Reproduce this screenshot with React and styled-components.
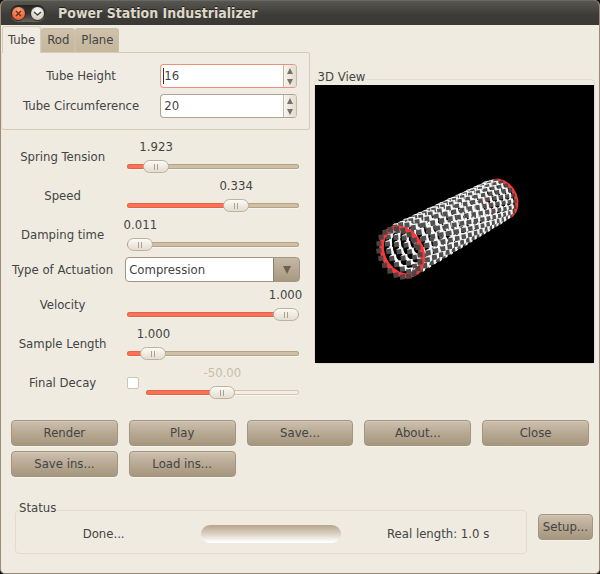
import React, { useState } from "react";
import styled, { createGlobalStyle } from "styled-components";

const GlobalStyle = createGlobalStyle`
  * {
    box-sizing: border-box;
  }

  body {
    margin: 0;
    background: #14110d;
    color: #444444;
    font: 13px/16px "DejaVu Sans Condensed", "DejaVu Sans", sans-serif;
  }

  button, input, select {
    margin: 0;
    font: inherit;
    color: inherit;
  }
`;

const Window = styled.main`
  display: flex;
  flex-direction: column;
  min-height: 100vh;
  border: 1px solid #9c8b76;
  border-top: 0;
  border-radius: 6px 6px 5px 5px;
  background: #efebe1;
  overflow: hidden;
`;

const TitleBar = styled.header`
  display: flex;
  align-items: center;
  gap: 12px;
  height: 25px;
  padding: 0 9px;
  border-top: 1px solid #6b6860;
  background: linear-gradient(#575650, #3c3b37 60%, #3a3935);
`;

const Title = styled.h1`
  margin: 0;
  font-size: 14px;
  line-height: 16px;
  color: #dfd8c8;
  text-shadow: 0 -1px #22211f;
`;

const WindowButtons = styled.div`
  display: flex;
  align-items: center;
  justify-content: space-between;
  width: 36px;
  height: 17px;
  padding: 0 1px;
  border-radius: 9px;
  background: linear-gradient(#252421, #35342f 50%, #67655d);
`;

const RoundButton = styled.button`
  display: grid;
  place-items: center;
  width: 15px;
  height: 15px;
  padding: 0;
  border: 1px solid #2c2a26;
  border-radius: 50%;
  background: ${(props) =>
    props.$close
      ? "radial-gradient(circle at 50% 25%, #f9a37c, #ea6237 75%)"
      : "radial-gradient(circle at 50% 30%, #ffffff, #cbc4b6 85%)"};
  color: ${(props) => (props.$close ? "#7b3018" : "#4a4843")};
`;

const Columns = styled.div`
  display: grid;
  grid-template-columns: 308fr 281fr;
  gap: 4px;
  align-items: start;
  padding-right: 4px;
`;

const TabList = styled.div`
  display: flex;
  align-items: flex-end;
  height: 27px;
  padding: 0 1px;
`;

const Tab = styled.button`
  height: ${(props) => (props.$active ? 27 : 24)}px;
  margin-bottom: ${(props) => (props.$active ? -1 : 0)}px;
  padding: 0 5px 1px;
  border: 1px solid ${(props) => (props.$active ? "#d8ccb8" : "#cdbfa8")};
  border-bottom: 0;
  border-radius: 3px 3px 0 0;
  background: ${(props) =>
    props.$active ? "#f0ece3" : "linear-gradient(#cfc2ab, #c5b69c)"};
`;

const TabPanel = styled.div`
  display: grid;
  grid-template-columns: 158fr 136fr;
  row-gap: 6px;
  align-items: center;
  padding: 11px 12px 11px 0;
  border: 1px solid #d6c9b5;
  border-left-color: #e6dccb;
  border-radius: 0 3px 3px 3px;
  background: #f0ece3;
`;

const Caption = styled.label`
  text-align: center;
  white-space: nowrap;
`;

const SpinBox = styled.div`
  display: flex;
  align-items: center;
  height: 24px;
  padding-left: 2px;
  border: 1px solid ${(props) => (props.$focused ? "#f0907c" : "#b0a28c")};
  border-right-color: #c5b9a5;
  border-radius: 4px;
  background: #fff;
  overflow: hidden;
`;

const SpinInput = styled.input`
  flex: 1;
  min-width: 0;
  height: 16px;
  padding: 0;
  border: 0;
  border-left: 1px solid ${(props) => (props.$focused ? "#333" : "transparent")};
  outline: 0;
  background: none;
`;

const SpinButtons = styled.div`
  display: grid;
  grid-template-rows: 1fr 1fr;
  width: 13px;
  height: 100%;
  border-left: 1px solid #c5b9a5;
  background: linear-gradient(90deg, #f7f4ee, #e3dccf);
`;

const SpinButton = styled.button`
  display: grid;
  place-items: center;
  padding: 0;
  border: 0;
  background: none;
  color: #77716a;
`;

const Settings = styled.div`
  padding: 7px 10px 0 3px;
`;

const SettingRow = styled.div`
  display: grid;
  grid-template-columns: 117fr 174fr;
  column-gap: 4px;
  align-items: center;
  height: ${(props) => (props.$compact ? 31 : 39)}px;
`;

const Control = styled.div`
  display: flex;
  align-items: center;
  gap: 7px;
  padding: 0 1px 0 2px;
`;

const Slider = styled.div`
  flex: 1;
  min-width: 0;
`;

const SliderValue = styled.output`
  display: flex;
  justify-content: center;
  width: 26px;
  line-height: 20px;
  white-space: nowrap;
  color: ${(props) => (props.$disabled ? "#c9bda6" : "inherit")};
`;

const Range = styled.input`
  display: block;
  width: 100%;
  height: 19px;
  appearance: none;
  background: none;

  &::-webkit-slider-runnable-track {
    height: 5px;
    border-radius: 3px;
    background: linear-gradient(
      90deg,
      #ff7057 var(--fill),
      ${(props) => (props.disabled ? "#f3efe6" : "#cdc0a7")} var(--fill)
    );
    box-shadow: inset 0 0 0 1px rgba(120, 70, 20, 0.25), 0 1px #f8f6f0;
  }

  &::-webkit-slider-thumb {
    appearance: none;
    width: 26px;
    height: 13px;
    margin-top: -4px;
    border: 1px solid #bdb29f;
    border-radius: 7px;
    background:
      linear-gradient(#aaa192, #aaa192) 10px 3px / 1px 6px no-repeat,
      linear-gradient(#aaa192, #aaa192) 13px 3px / 1px 6px no-repeat,
      linear-gradient(#fcfaf6, #e4ddcf);
  }
`;

const CheckBox = styled.input`
  appearance: none;
  width: 12px;
  height: 12px;
  border: 1px solid #cfc4b2;
  border-radius: 2px;
  background: #fff;

  &:checked {
    background: #fb7058;
  }
`;

const Combo = styled.div`
  display: grid;
  grid-template-columns: 1fr 26px;
  align-items: center;
  justify-items: center;
`;

const Select = styled.select`
  grid-area: 1 / 1 / 2 / 3;
  width: 100%;
  height: 25px;
  padding: 0 30px 0 3px;
  appearance: none;
  border: 1px solid #a3957f;
  border-radius: 4px;
  background:
    linear-gradient(#8f816d, #8f816d) right 25px top / 1px 100% no-repeat,
    linear-gradient(#c5b8a5, #a79880) right / 25px 100% no-repeat,
    #fff;
`;

const ComboArrow = styled.svg`
  grid-area: 1 / 2;
  pointer-events: none;
`;

const Group = styled.fieldset`
  min-width: 0;
  margin: 0;
  padding: 0;
  border: 1px solid #e2dbcb;
  border-radius: 4px;
`;

const Legend = styled.legend`
  margin-left: 2px;
  padding: 0 1px 4px;
`;

const ViewGroup = styled(Group)`
  margin-top: 44px;
`;

const Viewport = styled.svg`
  display: block;
  width: 100%;
  margin-top: -4px;
  background: #000;
`;

const PushButton = styled.button`
  height: 26px;
  padding: 0 4px;
  border: 1px solid #a39681;
  border-radius: 4px;
  background: linear-gradient(#cdc0ae, #b9ab96 45%, #a6967d);
  box-shadow: inset 0 1px #d3c8b8, 0 1px #f6f3ec;
  white-space: nowrap;
`;

const Actions = styled.div`
  display: grid;
  grid-template-columns: repeat(5, 1fr);
  gap: 5px 11px;
  padding: 18px 10px 0;
`;

const Footer = styled.footer`
  display: flex;
  align-items: center;
  gap: 11px;
  padding: 23px 6px 19px 14px;
`;

const StatusGroup = styled(Group)`
  flex: 1;
`;

const StatusRow = styled.div`
  display: grid;
  grid-template-columns: repeat(3, 1fr);
  place-items: center;
  padding: 5px 4px 10px;
`;

const Progress = styled.progress`
  display: block;
  width: 140px;
  height: 18px;
  appearance: none;
  border-radius: 9px;
  overflow: hidden;

  &::-webkit-progress-bar {
    background: linear-gradient(#b8a68c, #d8cdbd 45%, #ffffff 95%);
  }

  &::-webkit-progress-value {
    background: #fb7058;
  }
`;

const RINGS = 16;
const MASSES = 20;

// one ring of masses, s runs from 0 (near end) to 1 (far end)
function ringPoints(s) {
  const scale = 1 / (1 + 0.29 * s);
  const f = (1 - scale) / (1 - 1 / 1.29);
  const cx = 84 + 99 * f;
  const cy = 168 - 53 * f;
  const points = [];
  for (let i = 0; i < MASSES; i++) {
    const a = (2 * Math.PI * (i + s * 5)) / MASSES;
    points.push([
      cx + scale * (20.5 * Math.cos(a) + 3 * Math.sin(a)),
      cy + scale * (24 * Math.sin(a) + 2 * Math.cos(a)),
    ]);
  }
  return { points, scale };
}

function TubeView() {
  const rings = [];
  for (let r = RINGS - 1; r >= 0; r--) {
    const { points, scale } = ringPoints(r / (RINGS - 1));
    const end = r === 0 || r === RINGS - 1;
    const size = 5 * scale;
    const light = end ? "#f43a3a" : "#f6f6f6";
    rings.push(
      <g key={r}>
        {!end &&
          points.map(([x, y], i) => (
            <path
              key={i}
              d={`M${x - size / 2} ${y - size / 2}l2 -1.500l${size} -.8l.6 ${size}l-2 1.500z`}
              fill={light}
            />
          ))}
        <polygon
          points={points.map(([x, y]) => `${x + 3 * scale},${y - 1.5 * scale}`).join(" ")}
          fill="none"
          stroke={light}
          strokeWidth={end ? 4.6 * scale : 3 * scale}
        />
        {points.map(([x, y], i) => (
          <path
            key={i}
            d={`M${x - size / 2} ${y - size / 2}l${size} -.8l.6 ${size}l-${size} .8z`}
            fill={end ? "#4f4343" : "#505050"}
          />
        ))}
      </g>
    );
  }
  return (
    <Viewport viewBox="0 0 279 278" role="img" aria-label="Tube model">
      {rings}
    </Viewport>
  );
}

function SpinField({ id, label, initial, focused }) {
  const [value, setValue] = useState(initial);

  return (
    <>
      <Caption htmlFor={id}>{label}</Caption>
      <SpinBox $focused={focused}>
        <SpinInput
          id={id}
          inputMode="numeric"
          value={value}
          $focused={focused}
          onChange={(e) => setValue(Number(e.target.value) || 0)}
        />
        <SpinButtons>
          <SpinButton aria-label={`Increase ${label}`} onClick={() => setValue(value + 1)}>
            <svg width="6" height="6" viewBox="0 0 6 6">
              <path d="M3 0L6 6H0z" fill="currentColor" />
            </svg>
          </SpinButton>
          <SpinButton aria-label={`Decrease ${label}`} onClick={() => setValue(value - 1)}>
            <svg width="6" height="6" viewBox="0 0 6 6">
              <path d="M0 0H6L3 6z" fill="currentColor" />
            </svg>
          </SpinButton>
        </SpinButtons>
      </SpinBox>
    </>
  );
}

function ValueSlider({ id, label, initial, min, max, digits = 3, disabled }) {
  const [value, setValue] = useState(initial);
  const ratio = (value - min) / (max - min);
  const offset = `calc((100% - 26px) * ${ratio})`;

  return (
    <Slider>
      <SliderValue htmlFor={id} $disabled={disabled} style={{ marginLeft: offset }}>
        {value.toFixed(digits)}
      </SliderValue>
      <Range
        id={id}
        type="range"
        aria-label={label}
        min={min}
        max={max}
        step="any"
        value={value}
        disabled={disabled}
        style={{ "--fill": `calc((100% - 26px) * ${ratio} + 13px)` }}
        onChange={(e) => setValue(Number(e.target.value))}
      />
    </Slider>
  );
}

function SliderRow(props) {
  return (
    <SettingRow>
      <Caption htmlFor={props.id}>{props.label}</Caption>
      <Control>
        <ValueSlider {...props} />
      </Control>
    </SettingRow>
  );
}

function App() {
  const [tab, setTab] = useState("Tube");
  const [decay, setDecay] = useState(false);

  return (
    <>
      <GlobalStyle />
      <Window>
        <TitleBar>
          <WindowButtons>
            <RoundButton $close aria-label="Close window">
              <svg width="7" height="7" viewBox="0 0 7 7" stroke="currentColor" strokeWidth="1.6">
                <path d="M1 1L6 6M6 1L1 6" />
              </svg>
            </RoundButton>
            <RoundButton aria-label="Minimize window">
              <svg width="9" height="7" viewBox="0 0 9 7" fill="none" stroke="currentColor" strokeWidth="1.6">
                <path d="M1 2L4.500 5L8 2" />
              </svg>
            </RoundButton>
          </WindowButtons>
          <Title>Power Station Industrializer</Title>
        </TitleBar>

        <Columns>
          <div>
            <TabList role="tablist">
              {["Tube", "Rod", "Plane"].map((name) => (
                <Tab
                  key={name}
                  role="tab"
                  aria-selected={tab === name}
                  $active={tab === name}
                  onClick={() => setTab(name)}
                >
                  {name}
                </Tab>
              ))}
            </TabList>
            <TabPanel role="tabpanel">
              <SpinField id="height" label="Tube Height" initial={16} focused />
              <SpinField id="circumference" label="Tube Circumference" initial={20} />
            </TabPanel>

            <Settings>
              <SliderRow id="tension" label="Spring Tension" initial={1.923} min={0} max={17.6} />
              <SliderRow id="speed" label="Speed" initial={0.334} min={0} max={0.506} />
              <SliderRow id="damping" label="Damping time" initial={0.011} min={0.01} max={1} />
              <SettingRow $compact>
                <Caption htmlFor="actuation">Type of Actuation</Caption>
                <Combo>
                  <Select id="actuation" defaultValue="Compression">
                    <option>Compression</option>
                  </Select>
                  <ComboArrow width="8" height="8" viewBox="0 0 8 8">
                    <path d="M0 0H8L4 8z" fill="#6b6257" />
                  </ComboArrow>
                </Combo>
              </SettingRow>
              <SliderRow id="velocity" label="Velocity" initial={1} min={0} max={1} />
              <SliderRow id="length" label="Sample Length" initial={1} min={0.1} max={10} />
              <SettingRow>
                <Caption htmlFor="decay">Final Decay</Caption>
                <Control>
                  <CheckBox
                    id="decay"
                    type="checkbox"
                    checked={decay}
                    onChange={(e) => setDecay(e.target.checked)}
                  />
                  <ValueSlider
                    id="decay-level"
                    label="Final decay level"
                    initial={-50}
                    min={-100}
                    max={0}
                    digits={2}
                    disabled={!decay}
                  />
                </Control>
              </SettingRow>
            </Settings>
          </div>

          <ViewGroup>
            <Legend>3D View</Legend>
            <TubeView />
          </ViewGroup>
        </Columns>

        <Actions>
          <PushButton>Render</PushButton>
          <PushButton>Play</PushButton>
          <PushButton>Save...</PushButton>
          <PushButton>About...</PushButton>
          <PushButton>Close</PushButton>
          <PushButton>Save ins...</PushButton>
          <PushButton>Load ins...</PushButton>
        </Actions>

        <Footer>
          <StatusGroup>
            <Legend>Status</Legend>
            <StatusRow>
              <span>Done...</span>
              <Progress value={0} max={100} aria-label="Render progress" />
              <span>Real length: 1.0 s</span>
            </StatusRow>
          </StatusGroup>
          <PushButton>Setup...</PushButton>
        </Footer>
      </Window>
    </>
  );
}

export default App;
